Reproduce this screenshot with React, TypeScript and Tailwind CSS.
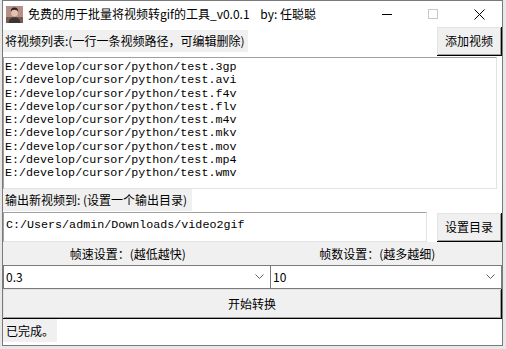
import { useState } from 'react';

const FILES = ['3gp', 'avi', 'f4v', 'flv', 'm4v', 'mkv', 'mov', 'mp4', 'wmv'].map(
  (ext) => `E:/develop/cursor/python/test.${ext}`,
);

const UI_FONT = "font-['Microsoft_YaHei_UI','Noto_Sans_CJK_SC',sans-serif] text-[12px] text-black";
const MONO_FONT = "font-['Liberation_Mono','Noto_Sans_CJK_SC',monospace] text-[11.7px] text-black";

// Tk 风格的按钮
function TkButton({ label, className = '' }: { label: string; className?: string }) {
  return (
    <button
      className={`${UI_FONT} flex items-center justify-center bg-[#f0f0f0] border-r border-b border-[#000] shadow-[inset_1px_1px_#e3e3e3,inset_-1px_-1px_#a0a0a0] ${className}`}
    >
      {label}
    </button>
  );
}

function Chevron() {
  return (
    <svg width="9" height="6" viewBox="0 0 9 6" className="shrink-0">
      <path d="M0.5 0.5 L4.5 4.5 L8.5 0.5" fill="none" stroke="#606060" strokeWidth="1" />
    </svg>
  );
}

function Combo({ value, className = '' }: { value: string; className?: string }) {
  return (
    <div
      className={`${UI_FONT} h-full flex items-center justify-between bg-white border border-[#7a7a7a] pl-[2px] pr-[6px] ${className}`}
    >
      <span>{value}</span>
      <Chevron />
    </div>
  );
}

function AppIcon() {
  return (
    <svg width="17" height="17" viewBox="0 0 17 17">
      <rect width="17" height="17" fill="#b78f86" />
      <rect x="0" y="11" width="17" height="6" fill="#7a5a55" />
      <ellipse cx="8.5" cy="6.5" rx="3.4" ry="4" fill="#e5c2b0" />
      <path d="M4.8 6 Q4.8 1.6 8.5 1.6 Q12.2 1.6 12.2 6 Q11 3.6 8.5 3.8 Q6 3.6 4.8 6Z" fill="#2b2220" />
      <path d="M2.5 17 Q3 11.5 8.5 11.3 Q14 11.5 14.5 17Z" fill="#3a3434" />
    </svg>
  );
}

export default function App() {
  const [files] = useState(FILES);

  return (
    <div className="w-[506px] h-[349px] bg-[#e8e8e8] overflow-hidden">
      <div className="ml-[2px] w-[501px] h-[346px] border border-[#7a7a7a] bg-white flex flex-col">
        {/* 标题栏 */}
        <div className="h-[26px] shrink-0 flex items-center bg-white">
          <div className="ml-[3px] mt-[1px]">
            <AppIcon />
          </div>
          <span className={`${UI_FONT} ml-[5px] whitespace-pre`}>
            免费的用于批量将视频转gif的工具_v0.0.1    by: 任聪聪
          </span>
          <div className="ml-auto flex items-center h-full">
            <div className="w-[46px] h-full flex items-center justify-center">
              <div className="w-[10px] h-px bg-black" />
            </div>
            <div className="w-[46px] h-full flex items-center justify-center">
              <div className="w-[10px] h-[10px] border border-[#c8c8c8]" />
            </div>
            <div className="w-[46px] h-full flex items-center justify-center">
              <svg width="11" height="11" viewBox="0 0 11 11">
                <path d="M0.5 0.5 L10.5 10.5 M10.5 0.5 L0.5 10.5" stroke="#000" strokeWidth="1" />
              </svg>
            </div>
          </div>
        </div>

        {/* 视频列表 */}
        <div className="h-[30px] shrink-0 flex items-start justify-between">
          <div className={`${UI_FONT} mt-[3px] h-[22px] w-[245px] bg-[#f0f0f0] flex items-center pl-[2px]`}>
            将视频列表:(一行一条视频路径，可编辑删除)
          </div>
          <TkButton label="添加视频" className="w-[65px] h-[29px]" />
        </div>

        <div
          className={`${MONO_FONT} h-[132px] w-[494px] shrink-0 bg-white border-t border-l border-[#a0a0a0] border-b border-r border-b-[#e3e3e3] border-r-[#e3e3e3] pl-[1px] pt-[3px] leading-[13.25px] whitespace-pre`}
        >
          {files.map((f) => (
            <div key={f}>{f}</div>
          ))}
        </div>

        {/* 输出目录 */}
        <div className="h-[22px] shrink-0 flex">
          <div className={`${UI_FONT} w-[189px] bg-[#f0f0f0] flex items-center pl-[2px]`}>
            输出新视频到: (设置一个输出目录)
          </div>
        </div>
        <div className="h-[31px] shrink-0 flex items-start">
          <div
            className={`${MONO_FONT} w-[424px] h-[30px] mt-[1px] bg-white border border-[#a0a0a0] border-b-[#e3e3e3] border-r-[#e3e3e3] pl-[2px] pt-[4px] whitespace-pre`}
          >
            C:/Users/admin/Downloads/video2gif
          </div>
          <TkButton label="设置目录" className="ml-auto mt-[2px] w-[65px] h-[29px]" />
        </div>

        {/* 参数设置 */}
        <div className={`${UI_FONT} h-[23px] shrink-0 grid grid-cols-2 bg-[#f0f0f0]`}>
          <div className="flex items-center justify-center">帧速设置：(越低越快)</div>
          <div className="flex items-center justify-center">帧数设置：(越多越细)</div>
        </div>
        <div className="h-[24px] shrink-0 flex">
          <Combo value="0.3" className="w-[268px]" />
          <Combo value="10" className="flex-1 border-l-0" />
        </div>

        <TkButton label="开始转换" className="h-[30px] w-full shrink-0" />

        {/* 状态 */}
        <div className="h-[23px] shrink-0 flex">
          <div className={`${UI_FONT} w-[54px] bg-[#f0f0f0] flex items-center pl-[3px]`}>已完成。</div>
        </div>
      </div>
    </div>
  );
}
